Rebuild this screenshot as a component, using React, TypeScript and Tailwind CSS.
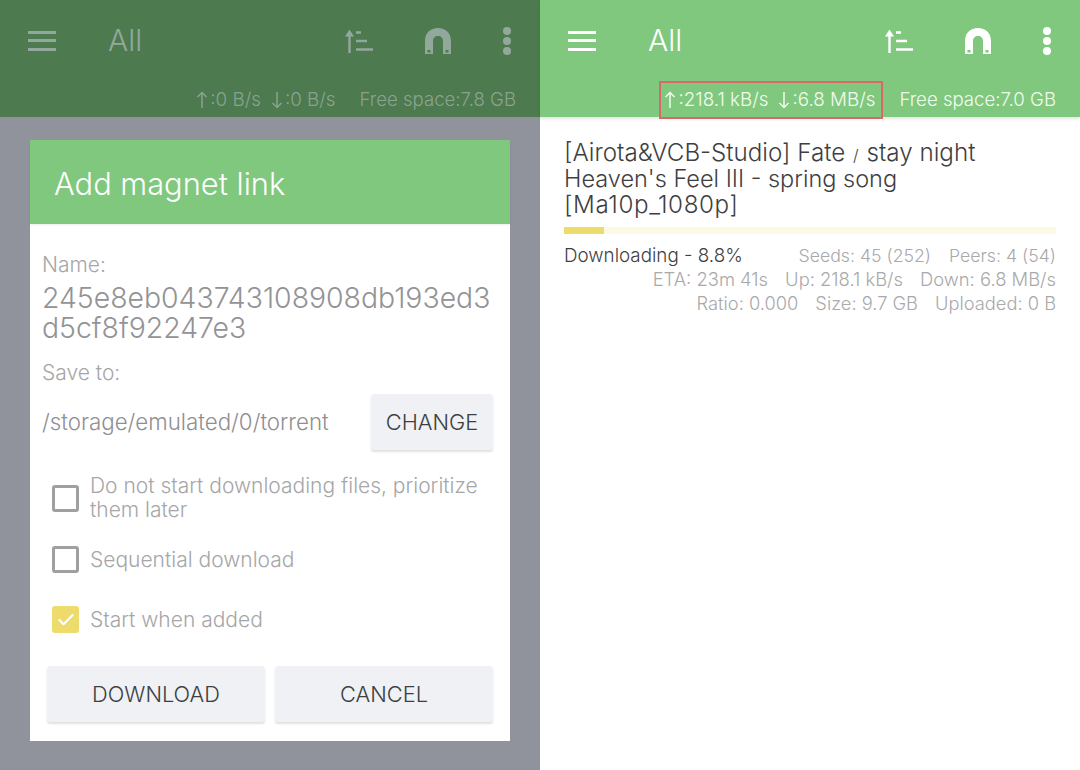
import { Check } from "lucide-react";

function SortIcon() {
  return (
    <svg width="30" height="26" viewBox="0 0 30 26" fill="none" stroke="currentColor" strokeWidth="2.4">
      <path d="M5.5 25V4" />
      <path d="M1 8.5 5.5 1.5 10 8.5Z" fill="currentColor" stroke="none" />
      <path d="M12 4.5h5M12 13h11M12 21.5h17" strokeWidth="2.6" />
    </svg>
  );
}

function MagnetIcon({ notch }: { notch: string }) {
  return (
    <svg width="28" height="28" viewBox="0 0 28 28" fill="currentColor">
      <path d="M1 27V14C1 6 6.500 1 14 1s13 5 13 13v13h-8V14c0-3-2-5-5-5s-5 2-5 5v13Z" />
      <path d="M3.500 23h3v2.500h-3zM21.500 23h3v2.500h-3z" fill={notch} />
    </svg>
  );
}

function Toolbar({ up, down, free, dim, boxed }: { up: string; down: string; free: string; dim?: boolean; boxed?: boolean }) {
  return (
    <header
      className={[
        "relative flex h-[117px] shrink-0 flex-col",
        dim ? "bg-[#4d7a4e] text-[#93a89c]" : "bg-[#80c87e] text-white shadow-[0_2px_3px_rgba(0,0,0,0.1)]",
      ].join(" ")}
    >
      <div className="flex h-[80px] items-center pt-[1px]">
        {/* Menu */}
        <div className="ml-[28px] flex h-[20px] w-[28px] flex-col justify-between">
          <span className="h-[3px] bg-current" />
          <span className="h-[3px] bg-current" />
          <span className="h-[3px] bg-current" />
        </div>
        <span className="ml-[52px] text-[30px] font-light">All</span>
        <div className="ml-auto flex items-center">
          <div className="mr-[50px]"><SortIcon /></div>
          <div className="mr-[51px]"><MagnetIcon notch={dim ? "#4d7a4e" : "#80c87e"} /></div>
          <div className="mr-[29px] flex flex-col gap-[2px]">
            <span className="size-[8px] rounded-full bg-current" />
            <span className="size-[8px] rounded-full bg-current" />
            <span className="size-[8px] rounded-full bg-current" />
          </div>
        </div>
      </div>
      <div className={["flex h-[37px] items-stretch justify-end pr-[24px] text-[18.6px] font-light", dim ? "text-[#8aa391]" : "text-[#f2fbf0]"].join(" ")}>
        <div
          className={[
            "mt-[1px] -mb-[2px] flex items-center gap-[10px] pl-[3px] pr-[6px] text-[18.8px]",
            boxed ? "border-2 border-[#d9686a]" : "border-2 border-transparent",
          ].join(" ")}
        >
          <span className="flex items-center gap-[2px]"><Arrow dir="up" />:{up}</span>
          <span className="flex items-center gap-[2px]"><Arrow dir="down" />:{down}</span>
        </div>
        <span className="ml-[16px] flex items-center pt-[2px]">Free space:{free}</span>
      </div>
    </header>
  );
}

function Arrow({ dir }: { dir: "up" | "down" }) {
  return (
    <svg width="12" height="18" viewBox="0 0 12 18" fill="none" stroke="currentColor" strokeWidth="1.500">
      {dir === "up" ? <path d="M6 17V1.500M1.500 6 6 1.500 10.500 6" /> : <path d="M6 1v15.500M1.500 12 6 16.500 10.500 12" />}
    </svg>
  );
}

function Box({ checked, className }: { checked?: boolean; className?: string }) {
  return (
    <span
      className={[
        "flex size-[27px] shrink-0 items-center justify-center rounded-[3px]",
        checked ? "bg-[#eddc6b] text-white" : "border-[3px] border-[#a0a0a3]",
        className ?? "",
      ].join(" ")}
    >
      {checked && <Check size={20} strokeWidth={2.500} />}
    </span>
  );
}

function GreyButton({ label, className }: { label: string; className: string }) {
  return (
    <button
      type="button"
      className={["flex h-[56px] items-center justify-center rounded-[3px] bg-[#eff1f4] text-[21.8px] font-light text-[#3c4043] shadow-[0_2px_2px_rgba(0,0,0,0.12)]", className].join(" ")}
    >
      {label}
    </button>
  );
}

function Dialog() {
  return (
    <div className="mx-[30px] mt-[23px] flex h-[601px] flex-col bg-white">
      <div className="flex h-[84px] shrink-0 items-center bg-[#80c87e] pt-[4px] pl-[24px] text-[30.8px] font-light text-white shadow-[0_1px_2px_rgba(0,0,0,0.08)]">
        Add magnet link
      </div>
      <div className="flex flex-1 flex-col pl-[12px] pr-[17px] text-[#a6a6a8]">
        <p className="mt-[28px] text-[21px] leading-[26px] font-light">Name:</p>
        <p className="mt-[5px] break-all text-[28.4px] leading-[30px] font-light text-[#939396]">
          245e8eb043743108908db193ed3d5cf8f92247e3
        </p>
        <p className="mt-[17px] text-[21px] leading-[26px] font-light">Save to:</p>
        <div className="mt-[8px] flex items-center justify-between">
          <span className="text-[22.3px] font-light text-[#8f8f92]">/storage/emulated/0/torrent</span>
          <GreyButton label="CHANGE" className="w-[122px]" />
        </div>
        <div className="mt-[24px] flex flex-col text-[21px] leading-[24px] font-light">
          <label className="flex items-center gap-[11px] pl-[10px]">
            <Box />
            <span>Do not start downloading files, prioritize them later</span>
          </label>
          <label className="mt-[24px] flex items-center gap-[11px] pl-[10px]">
            <Box />
            <span>Sequential download</span>
          </label>
          <label className="mt-[33px] flex items-center gap-[11px] pl-[10px]">
            <Box checked />
            <span>Start when added</span>
          </label>
        </div>
        <div className="mt-[33px] flex gap-[10px] pl-[5px]">
          <GreyButton label="DOWNLOAD" className="flex-1" />
          <GreyButton label="CANCEL" className="flex-1" />
        </div>
      </div>
    </div>
  );
}

function TorrentItem() {
  return (
    <div className="px-[24px] pt-[23px]">
      <h2 className="flex flex-col text-[24.2px] leading-[26px] font-light text-[#3f3f42]">
        <span>
          [Airota&amp;VCB-Studio] Fate <span className="mx-[1px] text-[16px] leading-none">/</span> stay night
        </span>
        <span className="text-[23.5px]">Heaven's Feel III - spring song</span>
        <span className="tracking-[0.6px]">[Ma10p_1080p]</span>
      </h2>
      <div className="mt-[9px] h-[7px] bg-[#fbfae6]">
        <div className="h-full bg-[#eddc6b]" style={{ width: "8.1%" }} />
      </div>
      <div className="mt-[11px] flex flex-col text-[17.7px] leading-[24px] font-light text-[#a9a9ab]">
        <div className="flex h-[22px] items-center justify-between">
          <span className="text-[18.8px] text-[#3f3f42]">Downloading - 8.8%</span>
          <div className="flex gap-[18px] pr-0">
            <span>Seeds: 45 (252)</span>
            <span>Peers: 4 (54)</span>
          </div>
        </div>
        <div className="flex justify-end gap-[17px] text-[18.4px]">
          <span>ETA: 23m 41s</span>
          <span>Up: 218.1 kB/s</span>
          <span>Down: 6.8 MB/s</span>
        </div>
        <div className="flex justify-end gap-[17px] text-[18.3px]">
          <span>Ratio: 0.000</span>
          <span>Size: 9.7 GB</span>
          <span>Uploaded: 0 B</span>
        </div>
      </div>
    </div>
  );
}

export default function App() {
  return (
    <div className="grid h-[770px] w-[1080px] grid-cols-2 overflow-hidden font-['Inter',sans-serif]">
      {/* Left: dialog open over dimmed list */}
      <div className="flex flex-col bg-[#91939c]">
        <Toolbar up="0 B/s" down="0 B/s" free="7.8 GB" dim />
        <Dialog />
      </div>

      {/* Right: torrent list */}
      <div className="flex flex-col bg-white">
        <Toolbar up="218.1 kB/s" down="6.8 MB/s" free="7.0 GB" boxed />
        <TorrentItem />
      </div>
    </div>
  );
}
